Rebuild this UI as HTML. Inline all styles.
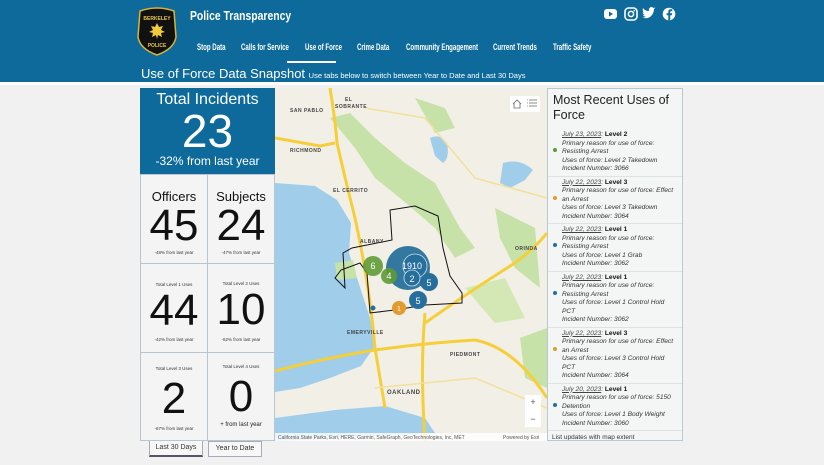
<!DOCTYPE html>
<html><head><meta charset="utf-8"><style>
*{margin:0;padding:0;box-sizing:border-box}
body{width:824px;height:465px;overflow:hidden;background:#f1f1f1;font-family:"Liberation Sans",sans-serif;position:relative}
.hdr{position:absolute;left:0;top:0;width:824px;height:84px;background:#0d6a9b}
.abs{position:absolute}
.nav{position:absolute;top:42px;font-weight:bold;font-size:9px;color:#fff;transform:scaleX(.68);transform-origin:left;white-space:nowrap}
.cell{position:absolute;background:#f4f4f4;border:1px solid #b9c6cf;text-align:center;color:#111}
.big{font-size:44px;line-height:44px}
.sm{font-size:4.5px;color:#333}
.rp{position:absolute;left:547px;top:88px;width:136px;height:353px;background:#f4f5f5;border:1px solid #b9c9d3;overflow:hidden}
.it{position:relative;padding:2px 2px 2px 14px;border-bottom:1px solid #dde2e5;font-size:6.6px;line-height:8.5px;color:#333;font-style:italic;white-space:nowrap}
.it b{font-style:normal;color:#111}
.it u{color:#444}
.dot{position:absolute;left:5px;width:4px;height:4px;border-radius:2px}
</style></head><body>
<div class="hdr"></div>
<div class="abs" style="left:0;top:82px;width:824px;height:3px;background:#fff"></div>
<svg class="abs" style="left:136px;top:7px" width="42" height="50" viewBox="0 0 42 50">
<path d="M4 4 Q21 -2 38 4 L40 30 Q38 42 21 48 Q4 42 2 30 Z" fill="#111" stroke="#d8b53a" stroke-width="1.5"/>
<text x="21" y="13" font-size="5" fill="#e8c64a" text-anchor="middle" font-weight="bold">BERKELEY</text>
<path d="M21 16 l2 4 4-1-2 4 4 2-4 1 1 4-4-2-1 4-1-4-4 2 1-4-4-1 4-2-2-4 4 1z" fill="#f0cc3a"/>
<text x="21" y="40" font-size="5" fill="#e8c64a" text-anchor="middle" font-weight="bold">POLICE</text>
</svg>
<div class="abs" style="left:190px;top:8px;color:#fff;font-weight:bold;font-size:13px;transform:scaleX(.8);transform-origin:left;white-space:nowrap">Police Transparency</div>
<div class="nav" style="left:197px">Stop Data</div>
<div class="nav" style="left:241px">Calls for Service</div>
<div class="nav" style="left:305px">Use of Force</div>
<div class="nav" style="left:357px">Crime Data</div>
<div class="nav" style="left:406px">Community Engagement</div>
<div class="nav" style="left:493px">Current Trends</div>
<div class="nav" style="left:553px">Traffic Safety</div>
<div class="abs" style="left:287px;top:61px;width:49px;height:2px;background:#fff"></div>
<div class="abs" style="left:141px;top:66px;color:#fff;font-size:13px;white-space:nowrap">Use of Force Data Snapshot <span style="font-size:7.5px">Use tabs below to switch between Year to Date and Last 30 Days</span></div>
<svg class="abs" style="left:603px;top:7px" width="74" height="14" viewBox="0 0 74 14">
<rect x="1" y="2" width="13" height="10" rx="3" fill="#fff"/><path d="M6 4.5v5l4-2.5z" fill="#0d6a9b"/>
<rect x="22" y="1" width="12" height="12" rx="3.5" fill="none" stroke="#fff" stroke-width="1.6"/><circle cx="28" cy="7" r="2.6" fill="none" stroke="#fff" stroke-width="1.5"/><circle cx="31.3" cy="3.7" r=".8" fill="#fff"/>
<path d="M41 11 q5 1 8-3 q2-3 2-6 l1.5-1.5 -2 .5 q-2-2-4 0 q-1 1-.5 3 q-4 0-6-3 q-1 3 1 4.5 l-1.5 0 q.5 2 2.5 2.5 l-2 .3 q1 1.5 3 1.5 q-1.5 1-4 1z" fill="#fff"/>
<circle cx="66" cy="7" r="6.3" fill="#fff"/><path d="M67.2 13.3v-5h1.7l.3-2h-2v-1.3q0-.9 1-.9h1.1v-1.8q-3.8-.6-4 2v2h-1.7v2h1.7v5z" fill="#0d6a9b"/>
</svg>
<div class="abs" style="left:140px;top:88px;width:135px;height:86px;background:#0d6a9b;color:#fff;text-align:center">
<div style="font-size:16px;margin-top:3px">Total Incidents</div>
<div style="font-size:46px;line-height:44px;margin-top:0px">23</div>
<div style="font-size:12px;margin-top:1px">-32% from last year</div>
</div>
<div class="cell" style="left:140px;top:174px;width:68px;height:90px"><div style="font-size:13px;margin-top:14px">Officers</div><div class="big">45</div><div class="sm" style="margin-top:2px">-48% from last year</div></div>
<div class="cell" style="left:207px;top:174px;width:68px;height:90px"><div style="font-size:13px;margin-top:14px">Subjects</div><div class="big">24</div><div class="sm" style="margin-top:2px">-47% from last year</div></div>
<div class="cell" style="left:140px;top:263px;width:68px;height:90px"><div class="sm" style="margin-top:18px">Total Level 1 Uses</div><div class="big" style="margin-top:2px">44</div><div class="sm" style="margin-top:4px">-42% from last year</div></div>
<div class="cell" style="left:207px;top:263px;width:68px;height:90px"><div class="sm" style="margin-top:17px">Total Level 2 Uses</div><div class="big" style="margin-top:2px">10</div><div class="sm" style="margin-top:5px">-62% from last year</div></div>
<div class="cell" style="left:140px;top:352px;width:68px;height:89px"><div class="sm" style="margin-top:13px">Total Level 3 Uses</div><div class="big" style="margin-top:6px">2</div><div class="sm" style="margin-top:5px">-67% from last year</div></div>
<div class="cell" style="left:207px;top:352px;width:68px;height:89px"><div class="sm" style="margin-top:11px">Total Level 4 Uses</div><div class="big" style="margin-top:6px">0</div><div style="font-size:6px;margin-top:3px;color:#222">+ from last year</div></div>
<div class="abs" style="left:149px;top:441px;width:54px;height:16px;background:#f7f7f7;border:1px solid #aab;border-top:none;border-bottom:2px solid #556;font-size:7px;text-align:center;line-height:14px;color:#333">Last 30 Days</div>
<div class="abs" style="left:208px;top:441px;width:54px;height:16px;background:#f7f7f7;border:1px solid #aab;font-size:7px;text-align:center;line-height:14px;color:#333">Year to Date</div>
<svg class="abs" style="left:275px;top:88px" width="272" height="353" viewBox="0 0 272 353">
<rect width="272" height="353" fill="#f2efe6"/>
<path d="M55 30 L75 25 L100 50 L130 75 L160 95 L185 140 L200 160 L180 170 L160 140 L125 110 L100 90 L80 60 Z" fill="#c6e2a8"/>
<path d="M140 10 L170 20 L180 40 L160 45 Z" fill="#c6e2a8"/>
<path d="M220 120 L260 140 L265 200 L240 180 L225 150 Z" fill="#c6e2a8"/>
<path d="M190 200 L230 190 L250 230 L220 235 Z" fill="#d3e8b5"/>
<path d="M245 250 L272 240 L272 300 L250 290 Z" fill="#c6e2a8"/>
<path d="M155 50 Q165 45 172 55 Q175 70 168 75 L160 68 Z" fill="#9fcdea"/>
<path d="M228 75 Q245 70 258 82 L250 92 L235 100 L225 95 Z" fill="#9fcdea"/>
<path d="M0 95 L40 98 L62 112 L76 135 L74 165 L82 190 L95 230 L100 258 L86 278 L55 290 L25 300 L0 304 Z" fill="#9fcdea"/>
<path d="M0 330 L60 322 L110 318 L150 330 L160 345 L0 353 Z" fill="#9fcdea"/>
<path d="M60 175 L78 172 L82 190 L62 192 Z" fill="#c6e2a8"/>
<g fill="none" stroke="#f5cf3a" stroke-width="3">
<path d="M55 0 Q60 30 62 55 Q70 90 80 130 Q95 200 100 260 L110 320"/>
<path d="M0 283 Q50 270 100 262 Q150 255 200 252 Q240 260 272 310"/>
<path d="M150 235 Q200 200 240 175 Q260 160 272 145"/>
<path d="M0 50 L45 58 L60 55"/>
<path d="M150 225 Q145 280 150 353"/>
</g>
<g fill="none" stroke="#f3e09a" stroke-width="1.5"><path d="M90 20 L150 30 L200 90 L272 110"/><path d="M100 300 L200 290 L272 320"/></g>
<path d="M115 122 L140 118 L163 128 L168 160 L175 188 L187 205 L187 215 L150 217 L120 222 L95 225 L92 185 L85 175 L66 182 L60 190 L70 200 L68 165 L77 160 L117 152 Z" fill="none" stroke="#111" stroke-width="1"/>
<circle cx="133" cy="180" r="22" fill="#1f6a98" opacity=".9"/>
<circle cx="140" cy="178" r="12" fill="#266f9d" stroke="#cfe1ec" stroke-width=".8"/>
<circle cx="137" cy="190" r="8" fill="#266f9d" stroke="#cfe1ec" stroke-width=".8"/>
<circle cx="98" cy="178" r="10" fill="#5f9a36" opacity=".9"/>
<circle cx="114" cy="188" r="8" fill="#5f9a36" opacity=".9"/>
<circle cx="154" cy="194" r="9" fill="#266f9d"/>
<circle cx="143" cy="212" r="9" fill="#266f9d"/>
<circle cx="124" cy="220" r="7" fill="#e39a2f"/>
<circle cx="98" cy="220" r="2.5" fill="#266f9d"/>
<g fill="#fff" font-size="9" text-anchor="middle"><text x="98" y="181">6</text><text x="114" y="191">4</text><text x="137" y="181">1910</text><text x="137" y="194">2</text><text x="154" y="198">5</text><text x="143" y="216">5</text><text x="124" y="223" font-size="7">1</text></g>
<g fill="#444" font-size="5" font-weight="bold" letter-spacing=".5"><text x="15" y="24">SAN PABLO</text><text x="15" y="64">RICHMOND</text><text x="58" y="104">EL CERRITO</text><text x="85" y="155">ALBANY</text><text x="240" y="162">ORINDA</text><text x="72" y="246">EMERYVILLE</text><text x="175" y="268">PIEDMONT</text><text x="112" y="306" font-size="6">OAKLAND</text><text x="70" y="13">EL</text><text x="60" y="20">SOBRANTE</text></g>
<rect x="235" y="8" width="30" height="16" rx="2" fill="#fff"/>
<path d="M238 16 l4-4 4 4 M239 15v5h6v-5" fill="none" stroke="#666" stroke-width=".8"/>
<path d="M254 12h8M254 15h8M254 18h8M252 12h.8M252 15h.8M252 18h.8" stroke="#666" stroke-width=".8"/>
<rect x="250" y="307" width="16" height="32" fill="#fff"/>
<text x="258" y="317" font-size="9" text-anchor="middle" fill="#555">+</text><text x="258" y="334" font-size="9" text-anchor="middle" fill="#555">−</text>
<rect x="0" y="345" width="272" height="8" fill="#fff" opacity=".8"/>
<text x="3" y="351" font-size="5" fill="#555">California State Parks, Esri, HERE, Garmin, SafeGraph, GeoTechnologies, Inc, MET</text>
<text x="228" y="351" font-size="5" fill="#555">Powered by Esri</text>
</svg>
<div class="rp">
<div style="font-size:12.5px;line-height:15px;color:#222;padding:4px 5px 6px">Most Recent Uses of Force</div>
<div class="it"><span class="dot" style="background:#5f9a36;top:19px"></span><u>July 23, 2023</u>: <b>Level 2</b><br>Primary reason for use of force:<br>Resisting Arrest<br>Uses of force: Level 2 Takedown<br>Incident Number: 3066</div>
<div class="it"><span class="dot" style="background:#e39a2f;top:19px"></span><u>July 22, 2023</u>: <b>Level 3</b><br>Primary reason for use of force: Effect<br>an Arrest<br>Uses of force: Level 3 Takedown<br>Incident Number: 3064</div>
<div class="it"><span class="dot" style="background:#266f9d;top:19px"></span><u>July 22, 2023</u>: <b>Level 1</b><br>Primary reason for use of force:<br>Resisting Arrest<br>Uses of force: Level 1 Grab<br>Incident Number: 3062</div>
<div class="it"><span class="dot" style="background:#266f9d;top:19px"></span><u>July 22, 2023</u>: <b>Level 1</b><br>Primary reason for use of force:<br>Resisting Arrest<br>Uses of force: Level 1 Control Hold<br>PCT<br>Incident Number: 3062</div>
<div class="it"><span class="dot" style="background:#e39a2f;top:19px"></span><u>July 22, 2023</u>: <b>Level 3</b><br>Primary reason for use of force: Effect<br>an Arrest<br>Uses of force: Level 3 Control Hold<br>PCT<br>Incident Number: 3064</div>
<div class="it"><span class="dot" style="background:#266f9d;top:19px"></span><u>July 20, 2023</u>: <b>Level 1</b><br>Primary reason for use of force: 5150<br>Detention<br>Uses of force: Level 1 Body Weight<br>Incident Number: 3060</div>
<div style="font-size:6.5px;color:#333;padding:3px 4px">List updates with map extent</div>
</div>
</body></html>
